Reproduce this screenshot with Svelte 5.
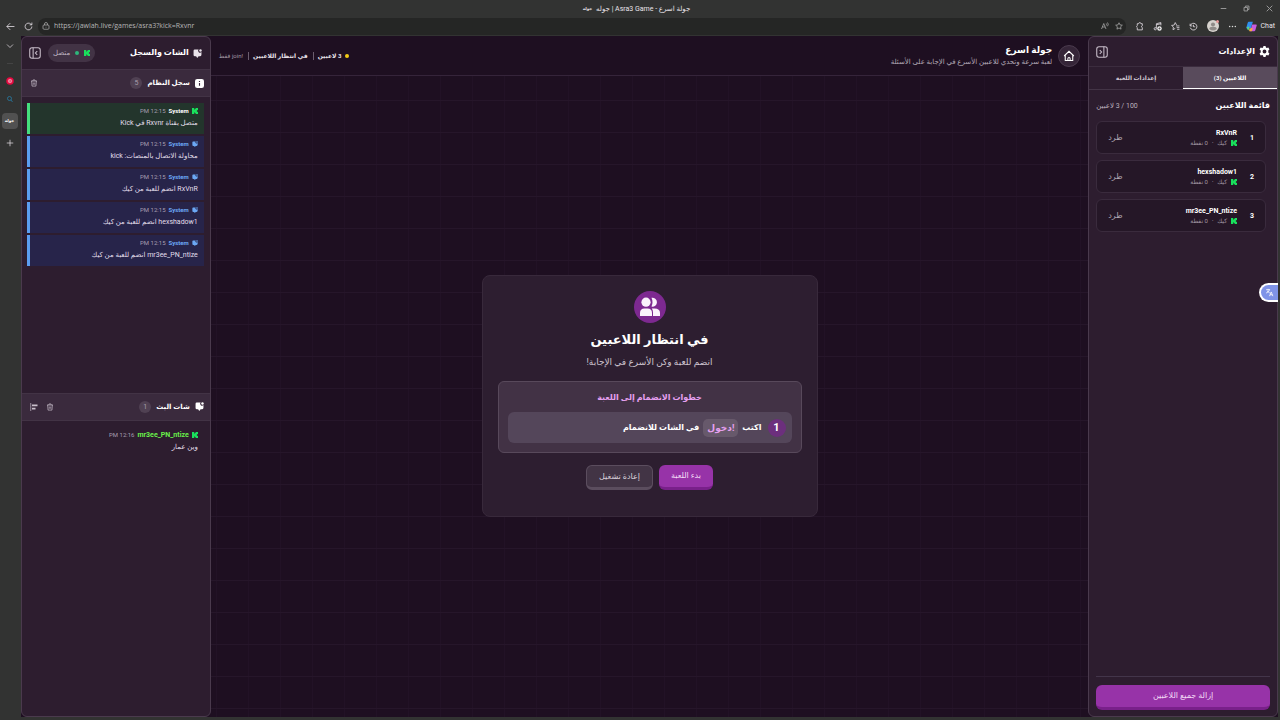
<script lang="ts">
    const players = ['RxVnR', 'hexshadow1', 'mr3ee_PN_ntize']

    const systemLog = [
        { kind: 'kick', text: 'متصل بقناة Rxvnr في Kick' },
        { kind: 'info', text: 'محاولة الاتصال بالمنصات: kick' },
        { kind: 'info', text: 'RxVnR انضم للعبة من كيك' },
        { kind: 'info', text: 'hexshadow1 انضم للعبة من كيك' },
        { kind: 'info', text: 'mr3ee_PN_ntize انضم للعبة من كيك' }
    ]

    let tab = $state('players')
    let url = $state('https://jawlah.live/games/asra3?kick=Rxvnr')
</script>

{#snippet kick()}
    <svg class="kick-logo" viewBox="0 0 12 12" aria-hidden="true">
        <path fill="#19e05c" d="M0 0h4.500v3H6V1.500h1.500V0H12v4h-1.500v1.300H9.500v1.400h1V8H12v4H7.500v-1.500H6V9H4.500v3H0z" />
    </svg>
{/snippet}

{#snippet bubble()}
    <svg class="bubble" viewBox="0 0 16 16" aria-hidden="true">
        <path fill="currentColor" d="M3 1h7a3.200 3.200 0 0 0 5 4.500V10a3 3 0 0 1-3 3h-2L7.500 15.800 5.500 13H3.500A2.500 2.500 0 0 1 1 10.500V3a2 2 0 0 1 2-2z" />
        <circle fill="currentColor" cx="13.300" cy="2.700" r="2.200" />
    </svg>
{/snippet}

{#snippet trash()}
    <svg viewBox="0 0 16 16" aria-hidden="true">
        <path class="line" d="M2 4h12M5.500 4l.8-2.200h3.400l.8 2.200M3.300 4l.8 10.200h7.800L12.700 4M6.500 7v4.500M9.500 7v4.500" />
    </svg>
{/snippet}

<div class="browser">
    <header class="titlebar">
        <div class="title">
            <b class="mark">جوله</b>
            <span dir="rtl">جولة اسرع - Asra3 Game | جوله</span>
        </div>
        <div class="window-buttons">
            <button aria-label="Minimize"><svg viewBox="0 0 10 10"><path class="line" d="M1 5h8" /></svg></button>
            <button aria-label="Restore"><svg viewBox="0 0 10 10"><path class="line" d="M1.500 3.500h5v5h-5zM3.500 3V1.500h5v5H7" /></svg></button>
            <button aria-label="Close"><svg viewBox="0 0 10 10"><path class="line" d="M1 1l8 8M9 1L1 9" /></svg></button>
        </div>
    </header>

    <div class="toolbar">
        <button aria-label="Back"><svg viewBox="0 0 16 16"><path class="line" d="M15 8H1.500M7.500 2L1.500 8l6 6" /></svg></button>
        <button aria-label="Reload"><svg viewBox="0 0 16 16"><path class="line" d="M14 8a6 6 0 1 1-2-4.500L13.500 5M14 1v4h-4" /></svg></button>
        <div class="address">
            <svg viewBox="0 0 16 16"><rect class="line" x="2" y="6" width="12" height="8.500" rx="2" /><path class="line" d="M5 6V4a3 3 0 0 1 6 0v2M8 9.500v1.500" /></svg>
            <input aria-label="Address" bind:value={url} />
            <button aria-label="Read aloud"><svg viewBox="0 0 16 16"><path class="line" d="M1 14L5.500 3 10 14M2.700 10h5.600M10.500 3q1.500 1.500 0 4M13 1q3 3.500 0 7.500" /></svg></button>
            <button aria-label="Favorite"><svg viewBox="0 0 16 16"><path class="line" d="M8 1.500l2 4.300 4.700.6-3.500 3.200.9 4.700L8 12l-4.100 2.300.9-4.700L1.300 6.400l4.700-.6z" /></svg></button>
        </div>
        <div class="tools">
            <button aria-label="Extensions"><svg viewBox="0 0 16 16"><path class="line" d="M4 3h2.500a2 2 0 0 1 4 0H13v3.500a1.800 1.800 0 0 0 0 3.500v4H4v-4a2 2 0 0 1 0-3.500z" /></svg></button>
            <button aria-label="Media"><svg viewBox="0 0 16 16"><path class="line" d="M6 11V3l8-2v5M6 5l8-2" /><circle class="line" cx="4" cy="12" r="2" /><circle fill="#eee" cx="11.500" cy="11.500" r="4" /><path stroke="#333" d="M11.500 9.500v4M9.500 11.500h4" /></svg></button>
            <button aria-label="Favorites"><svg viewBox="0 0 16 16"><path class="line" d="M10 5.500L7.500 1 5.500 5.500l-4.500.6 3.300 3-.8 4.500 4-2.200M9 7h6M10 10h5M11 13h4" /></svg></button>
            <button aria-label="History"><svg viewBox="0 0 16 16"><path class="line" d="M2 3v4h4M2.300 6.500a6 6 0 1 1 0 3.500M8 5v3.500h3" /></svg></button>
            <button class="avatar" aria-label="Profile"><svg viewBox="0 0 16 16"><circle fill="#d7d3ce" cx="8" cy="8" r="8" /><circle fill="#8f8b88" cx="8" cy="6" r="2.700" /><path fill="#8f8b88" d="M3 12q0-3 5-3t5 3q-5 4-10 0" /><circle fill="#e79a9a" cx="14" cy="2" r="2" /></svg></button>
            <button aria-label="More"><svg viewBox="0 0 16 16"><g fill="#ddd"><circle cx="3" cy="8" r="1.300" /><circle cx="8" cy="8" r="1.300" /><circle cx="13" cy="8" r="1.300" /></g></svg></button>
            <button class="copilot">
                <svg viewBox="0 0 16 16"><path fill="#2f8ff0" d="M4 1h6L7 11H1.500Q0 11 .6 9L2.500 2.500Q3 1 4 1z" /><path fill="#5ccf86" d="M1 9l4-1-1 5Q3 14 2 12z" /><path fill="#c65be0" d="M9 5h5.500Q16 5 15.500 7l-2 6.500Q13 15 12 15H6z" /><path fill="#f3a548" d="M5 11l5-1-1.500 4.500Q8 15 7 15H5Q4 14 5 11z" /></svg>
                Chat
            </button>
        </div>
    </div>

    <div class="workspace">
        <nav class="rail">
            <button aria-label="Tabs"><svg viewBox="0 0 16 16"><path class="line" d="M2 5l6 6 6-6" /></svg></button>
            <hr />
            <button aria-label="Video"><svg viewBox="0 0 16 16"><circle fill="#e5093f" cx="8" cy="8" r="7.500" /><circle fill="none" stroke="#fff" cx="8" cy="8" r="3.500" /><path fill="#fff" d="M7 6l3 2-3 2z" /></svg></button>
            <button class="search" aria-label="Search"><svg viewBox="0 0 16 16"><circle class="line" cx="7" cy="7" r="4" /><path class="line" d="M10 10l3 4" /></svg></button>
            <button class="current">جوله</button>
            <button aria-label="New tab"><svg viewBox="0 0 16 16"><path class="line" d="M8 1.500v13M1.500 8h13" /></svg></button>
        </nav>

        <div class="app" dir="rtl">
            <aside class="panel">
                <div class="panel-head settings-head">
                    <svg class="gear" viewBox="0 0 16 16"><path fill="#fff" fill-rule="evenodd" d="M6.500 0h3l.6 2.300 1.200.7 2.300-.7 1.600 2.700L13.500 6.700v2.600l1.700 1.700-1.600 2.700-2.300-.7-1.200.7L9.500 16h-3l-.6-2.300-1.200-.7-2.300.7L.8 11l1.700-1.700V6.700L.8 5l1.600-2.700 2.300.7 1.200-.7zM8 5.200a2.800 2.800 0 1 0 0 5.600 2.800 2.800 0 0 0 0-5.600z" /></svg>
                    <h2>الإعدادات</h2>
                    <button class="collapse" aria-label="إخفاء"><svg viewBox="0 0 16 16"><rect class="line" x="1" y="1" width="14" height="14" rx="3" /><path class="line" d="M10.500 1v14M5 5.500L7.500 8 5 10.500" /></svg></button>
                </div>
                <div class="tabs">
                    <button class:active={tab == 'players'} onclick={() => (tab = 'players')}>اللاعبين (3)</button>
                    <button class:active={tab == 'game'} onclick={() => (tab = 'game')}>إعدادات اللعبة</button>
                </div>
                <div class="list-head">
                    <h3>قائمة اللاعبين</h3>
                    <span><bdi dir="ltr">3 / 100</bdi> لاعبين</span>
                </div>
                <ol class="players">
                    {#each players as name, i}
                        <li>
                            <b class="rank">{i + 1}</b>
                            <div class="who">
                                <b>{name}</b>
                                <small>{@render kick()} كيك <i>•</i> 0 نقطة</small>
                            </div>
                            <button>طرد</button>
                        </li>
                    {/each}
                </ol>
                <div class="panel-foot">
                    <button class="primary">إزالة جميع اللاعبين</button>
                </div>
            </aside>

            <main>
                <div class="game-head">
                    <a class="home" href="/" aria-label="الرئيسية"><svg viewBox="0 0 16 16"><path class="line" d="M1.500 8L8 1.800 14.500 8M3 7v7h10V7M6.500 14v-2.500a1.500 1.500 0 0 1 3 0V14" /></svg></a>
                    <div class="game-name">
                        <h1>جولة اسرع</h1>
                        <p>لعبة سرعة وتحدي للاعبين الأسرع في الإجابة على الأسئلة</p>
                    </div>
                    <div class="status">
                        <span class="dot"></span>
                        <b>3 لاعبين</b>
                        <b>في انتظار اللاعبين</b>
                        <span class="hint">!join فقط</span>
                    </div>
                </div>
                <div class="board">
                    <section class="waiting">
                        <div class="badge">
                            <svg viewBox="0 0 20 20"><g fill="#fbf3fc"><circle cx="6" cy="5.200" r="4.600" /><path d="M0 19v-3q0-4.500 4.500-4.500h3Q12 11.500 12 16v3zM13 19v-3.500q0-2.500-1.200-4h2.700Q20 11.500 20 16v3zM11.500.8a4.500 4.500 0 1 1 0 8.800q2-4.400 0-8.800z" /></g></svg>
                        </div>
                        <h2>في انتظار اللاعبين</h2>
                        <p>انضم للعبة وكن الأسرع في الإجابة!</p>
                        <div class="steps">
                            <h3>خطوات الانضمام إلى اللعبة</h3>
                            <div class="step">
                                <span class="number">1</span>
                                <span>اكتب</span>
                                <code>!دخول</code>
                                <span>في الشات للانضمام</span>
                            </div>
                        </div>
                        <div class="actions">
                            <button class="primary">بدء اللعبة</button>
                            <button class="secondary">إعادة تشغيل</button>
                        </div>
                    </section>
                </div>
            </main>

            <aside class="panel">
                <div class="panel-head chat-head">
                    {@render bubble()}
                    <h2>الشات والسجل</h2>
                    <span class="connected">{@render kick()}<span class="dot"></span>متصل</span>
                    <button class="collapse" aria-label="إخفاء"><svg viewBox="0 0 16 16"><rect class="line" x="1" y="1" width="14" height="14" rx="3" /><path class="line" d="M5.500 1v14M11 5.500L8.500 8l2.500 2.500" /></svg></button>
                </div>
                <section class="feed">
                    <div class="feed-head">
                        <svg viewBox="0 0 16 16"><rect fill="#fff" width="16" height="16" rx="4" /><path stroke="#3a2b3e" stroke-width="2" d="M8 7v5M8 3.500v2" /></svg>
                        <h3>سجل النظام</h3>
                        <span class="count">5</span>
                        <div class="feed-tools">
                            <button aria-label="مسح">{@render trash()}</button>
                        </div>
                    </div>
                    <div class="log">
                        {#each systemLog as entry}
                            <div class="entry {entry.kind}">
                                <div class="meta">
                                    {#if entry.kind == 'kick'}{@render kick()}{:else}{@render bubble()}{/if}
                                    <b>System</b>
                                    <time dir="ltr">PM 12:15</time>
                                </div>
                                <p>{entry.text}</p>
                            </div>
                        {/each}
                    </div>
                </section>
                <section class="feed">
                    <div class="feed-head">
                        {@render bubble()}
                        <h3>شات البث</h3>
                        <span class="count">1</span>
                        <div class="feed-tools">
                            <button aria-label="مسح">{@render trash()}</button>
                            <button aria-label="محاذاة"><svg viewBox="0 0 16 16"><path class="line" d="M1.500 0v16" /><path fill="currentColor" d="M4 3h11v3.500H4zM4 9.500h7V13H4z" /></svg></button>
                        </div>
                    </div>
                    <div class="log">
                        <div class="entry message">
                            <div class="meta">
                                {@render kick()}
                                <b>mr3ee_PN_ntize</b>
                                <time dir="ltr">PM 12:16</time>
                            </div>
                            <p>وين عمار</p>
                        </div>
                    </div>
                </section>
            </aside>
        </div>
    </div>
    <button class="translate" aria-label="Translate"><svg viewBox="0 0 16 16"><path class="line" d="M2 3h7M5.500 1.500V3M8 3q-1 4-6 6M3.500 5l5 4M8 14.500L11 7l3 7.500M9 12h4" /></svg></button>
</div>

<style>
    :global(body) {
        margin: 0;
        background: #323332;
    }
    .browser {
        height: 100vh;
        display: flex;
        flex-direction: column;
        background: #323332;
        color: #e9e3ea;
        font: 7px/10px Roboto, "DejaVu Sans", sans-serif;
    }
    .browser * {
        box-sizing: border-box;
    }
    h1, h2, h3, p, ol, hr {
        margin: 0;
        padding: 0;
    }
    button, input {
        font: inherit;
        color: inherit;
        background: none;
        border: 0;
        padding: 0;
    }
    button {
        display: flex;
        align-items: center;
        justify-content: center;
    }
    svg {
        width: 9px;
        height: 9px;
        flex: none;
    }
    .line {
        fill: none;
        stroke: currentColor;
        stroke-width: 1.4;
    }
    .kick-logo {
        width: 6px;
        height: 6px;
    }

    .titlebar {
        display: grid;
        grid-template-columns: 1fr auto 1fr;
        align-items: center;
        height: 17px;
        flex: none;
        padding-right: 7px;
    }
    .title {
        grid-column: 2;
        display: flex;
        align-items: center;
        gap: 4px;
    }
    .mark {
        font-size: 4px;
    }
    .window-buttons {
        grid-column: 3;
        display: flex;
        justify-content: flex-end;
        gap: 16px;
        color: #999;
    }
    .window-buttons svg {
        width: 7px;
        height: 7px;
    }
    .toolbar {
        display: flex;
        align-items: center;
        height: 19px;
        flex: none;
        gap: 9px;
        padding: 0 5px 1px 6px;
    }
    .address {
        flex: 1;
        display: flex;
        align-items: center;
        gap: 4px;
        height: 17px;
        margin-left: -4px;
        padding: 0 3px 0 4px;
        background: #252625;
        border-radius: 8px;
        color: #b5b5b5;
    }
    .address svg {
        width: 8px;
        height: 8px;
    }
    .address button {
        margin-left: 2px;
    }
    .address input {
        flex: 1;
        min-width: 0;
        outline: none;
        font-family: "Open Sans", sans-serif;
    }
    .tools {
        display: flex;
        align-items: center;
        gap: 9px;
    }
    .avatar svg {
        width: 12px;
        height: 12px;
    }
    .copilot {
        gap: 3px;
    }
    .copilot svg {
        width: 11px;
        height: 11px;
    }

    .workspace {
        flex: 1;
        min-height: 0;
        display: flex;
        padding: 0 2px 3px 0;
    }
    .rail {
        width: 21px;
        flex: none;
        display: flex;
        flex-direction: column;
        align-items: center;
        gap: 10px;
        padding: 6px 2px 0 0;
    }
    .rail hr {
        width: 6px;
        margin: 3px 0;
        border: 0;
        border-top: 1px solid #444;
    }
    .rail svg {
        width: 8px;
        height: 8px;
    }
    .search {
        color: #2585b5;
    }
    .current {
        width: 16px;
        height: 16px;
        border-radius: 4px;
        background: #515151;
        color: #fff;
        font-size: 4px;
        font-weight: bold;
    }

    .app {
        flex: 1;
        min-width: 0;
        display: flex;
        background: #1e0f21;
    }
    .panel {
        width: 15.1%;
        min-width: 180px;
        flex: none;
        display: flex;
        flex-direction: column;
        background: #2d1d2f;
        border: 1px solid #4a3a4d;
        border-radius: 6px;
    }
    .panel-head {
        display: flex;
        align-items: center;
        gap: 4px;
        flex: none;
        padding: 0 7px;
    }
    .settings-head {
        height: 29px;
    }
    .chat-head {
        height: 32px;
    }
    .panel-head h2 {
        flex: 1;
        font-size: 8px;
        line-height: 12px;
        color: #fff;
    }
    .chat-head .bubble {
        margin-right: 1px;
    }
    .gear {
        width: 11px;
        height: 11px;
    }
    .collapse {
        color: #c9bfcb;
    }
    .collapse svg {
        width: 12px;
        height: 12px;
    }
    .tabs {
        display: flex;
        flex: none;
        height: 24px;
        border-top: 1px solid #3b2c3e;
        border-bottom: 1px solid #433446;
    }
    .tabs button {
        flex: 1;
        color: #cfc7d1;
        font-size: 6px;
        font-weight: 600;
    }
    .tabs .active {
        background: #594b5c;
        color: #fff;
        border-bottom: 1px solid #fff;
    }
    .list-head {
        display: flex;
        justify-content: space-between;
        align-items: center;
        padding: 9px 7px 8px;
        line-height: 14px;
        color: #bcb2be;
    }
    .list-head h3 {
        font-size: 8px;
        color: #fff;
    }
    .players {
        flex: 1;
        display: flex;
        flex-direction: column;
        gap: 6px;
        list-style: none;
        padding: 0 11px 0 7px;
    }
    .players li {
        display: flex;
        align-items: center;
        height: 33px;
        padding: 0 11px;
        border: 1px solid #3a2b3d;
        border-radius: 6px;
        background: #251727;
    }
    .rank {
        width: 17px;
        color: #fff;
    }
    .who {
        flex: 1;
        color: #fff;
    }
    .who b {
        display: block;
    }
    .who small {
        display: flex;
        align-items: center;
        gap: 4px;
        font-size: 6px;
        line-height: 9px;
        color: #a197a3;
    }
    .who i {
        font-size: 4px;
    }
    .players button {
        color: #b1a8b3;
        font-size: 8px;
    }
    .panel-foot {
        margin: 0 7px;
        padding: 8px 0 6px;
        border-top: 1px solid #43354a;
    }
    .primary {
        background: #9733a8;
        color: #f3dcf6;
        border-bottom: 3px solid #79208a;
        border-radius: 6px;
        font-size: 8px;
    }
    .panel-foot .primary {
        width: 100%;
        height: 25px;
    }

    main {
        flex: 1;
        min-width: 0;
        display: flex;
        flex-direction: column;
    }
    .game-head {
        display: flex;
        align-items: center;
        flex: none;
        height: 40px;
        gap: 6px;
        padding: 0 8px;
        border-bottom: 1px solid #35243a;
    }
    .home {
        display: flex;
        align-items: center;
        justify-content: center;
        width: 22px;
        height: 22px;
        border: 1px solid #4b3b4e;
        border-radius: 50%;
        background: #352538;
        color: #fff;
    }
    .home svg {
        width: 12px;
        height: 12px;
    }
    .game-name {
        flex: 1;
    }
    h1 {
        font-size: 9px;
        line-height: 13px;
        color: #fff;
    }
    .game-name p {
        color: #b3a9b6;
    }
    .status {
        display: flex;
        align-items: center;
        gap: 4px;
        font-size: 6px;
    }
    .status b + b, .hint {
        padding-right: 5px;
        border-right: 1px solid #6b5d6e;
        line-height: 8px;
    }
    .hint {
        color: #a197a3;
    }
    .dot {
        width: 4px;
        height: 4px;
        border-radius: 50%;
        background: #f4cb13;
    }
    .board {
        flex: 1;
        min-height: 0;
        display: flex;
        align-items: center;
        justify-content: center;
        padding-bottom: 1px;
        background-image: linear-gradient(#26162a 1px, transparent 1px), linear-gradient(90deg, #221226 1px, transparent 1px);
        background-size: 32px 32px;
        background-position: 5px 24px;
    }
    .waiting {
        width: 336px;
        display: flex;
        flex-direction: column;
        align-items: center;
        padding: 15px 15px 26px;
        border: 1px solid #38293b;
        border-radius: 8px;
        background: #2d1e30;
    }
    .badge {
        display: flex;
        align-items: center;
        justify-content: center;
        width: 32px;
        height: 32px;
        border-radius: 50%;
        background: #7d2990;
    }
    .badge svg {
        width: 20px;
        height: 20px;
    }
    .waiting h2 {
        margin-top: 7px;
        font-size: 13px;
        line-height: 20px;
        color: #fff;
    }
    .waiting p {
        margin: 6px 0 13px;
        font-size: 9px;
        line-height: 12px;
        color: #cdc4cf;
    }
    .steps {
        width: 100%;
        padding: 9px;
        border: 1px solid #58495b;
        border-radius: 6px;
        background: #423245;
    }
    .steps h3 {
        margin-bottom: 7px;
        font-size: 8px;
        line-height: 14px;
        text-align: center;
        color: #e6a0f0;
    }
    .step {
        display: flex;
        align-items: center;
        gap: 4px;
        height: 31px;
        padding: 0 6px;
        border-radius: 6px;
        background: #54465a;
        color: #fff;
        font-size: 8px;
        font-weight: bold;
    }
    .number {
        width: 18px;
        height: 18px;
        margin-left: 2px;
        border-radius: 50%;
        background: #6c2f7d;
        text-align: center;
        font-size: 11px;
        line-height: 18px;
    }
    code {
        padding: 0 4px;
        border-radius: 5px;
        background: #67596b;
        color: #e6a0f0;
        font: bold 9px/18px Roboto, "DejaVu Sans", sans-serif;
    }
    .actions {
        display: flex;
        gap: 6px;
        margin-top: 12px;
    }
    .actions button {
        height: 25px;
        padding: 0 12px;
    }
    .secondary {
        border: 1px solid #5b4d5e;
        border-bottom-width: 3px;
        border-radius: 6px;
        background: #423445;
        color: #d9d1db;
        font-size: 8px;
    }

    .connected {
        display: flex;
        align-items: center;
        gap: 5px;
        height: 18px;
        margin-left: 3px;
        padding: 0 5px;
        border-radius: 9px;
        background: #423345;
        color: #bfb5c1;
    }
    .connected .dot {
        background: #2eb67c;
    }
    .feed {
        flex: 1;
        min-height: 0;
    }
    .feed-head {
        display: flex;
        align-items: center;
        gap: 5px;
        height: 28px;
        padding: 0 6px 0 8px;
        border-top: 1px solid #423345;
        border-bottom: 1px solid #423345;
        background: #3a2a3d;
        color: #fff;
    }
    .feed-head h3 {
        font-size: 7px;
        line-height: 12px;
    }
    .feed-tools {
        display: flex;
        gap: 8px;
        color: #c9bfcb;
    }
    .feed-head svg {
        width: 9px;
        height: 9px;
    }
    .feed-tools svg {
        width: 8px;
        height: 8px;
    }
    .count {
        width: 12px;
        height: 12px;
        margin-left: auto;
        border-radius: 50%;
        background: #504153;
        color: #a89eaa;
        text-align: center;
        line-height: 12px;
    }
    .log {
        display: flex;
        flex-direction: column;
        gap: 2px;
        padding: 6px;
        padding-left: 5px;
    }
    .entry {
        height: 31px;
        padding: 2px 6px;
        border-left: 3px solid transparent;
        line-height: 12px;
    }
    .entry p {
        color: #e2dfeb;
    }
    .meta {
        display: flex;
        align-items: center;
        gap: 3px;
        font-size: 6px;
        color: #a79fb2;
    }
    .meta .bubble {
        width: 6px;
        height: 6px;
    }
    .kick {
        background: #23352c;
        border-color: #45dc7e;
    }
    .kick b {
        color: #fff;
    }
    .info {
        background: #27244a;
        border-color: #5b9df0;
    }
    .info b, .info .bubble {
        color: #6ba8f5;
    }
    .message b {
        color: #69f04a;
        font-size: 7px;
    }

    /* floats over the page edge */
    .translate {
        position: absolute;
        right: 2px;
        top: 283px;
        width: 19px;
        height: 19px;
        border: 2px solid #fff;
        border-right: 0;
        border-radius: 10px 0 0 10px;
        background: #7f93e8;
        color: #fff;
    }
</style>
